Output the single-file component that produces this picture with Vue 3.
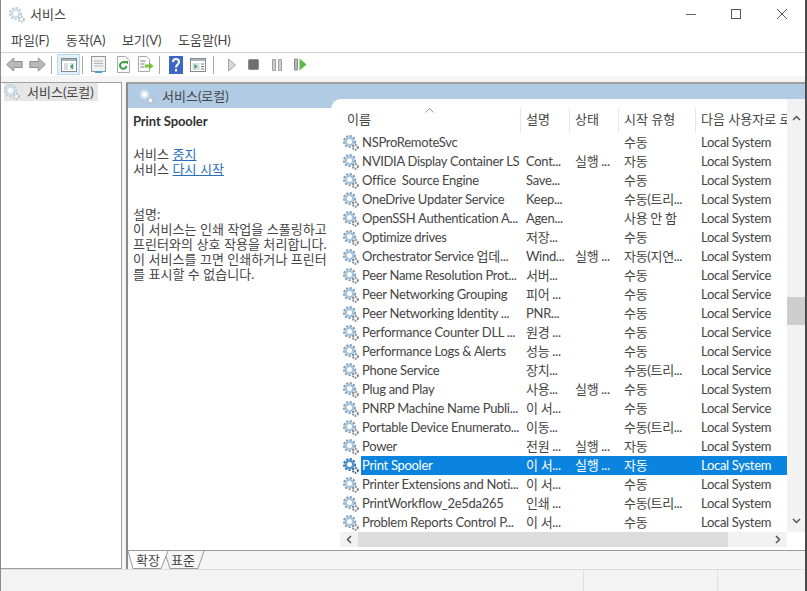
<script setup>
import { h } from 'vue'

const SYS = 'Local System'
const SVC = 'Local Service'
const RUN = '실행 ...'

const services = [
  ['NSProRemoteSvc', '', '', '수동', SYS],
  ['NVIDIA Display Container LS', 'Cont...', RUN, '자동', SYS],
  ['Office  Source Engine', 'Save...', '', '수동', SYS],
  ['OneDrive Updater Service', 'Keep...', '', '수동(트리...', SYS],
  ['OpenSSH Authentication A...', 'Agen...', '', '사용 안 함', SYS],
  ['Optimize drives', '저장...', '', '수동', SYS],
  ['Orchestrator Service 업데...', 'Wind...', RUN, '자동(지연...', SYS],
  ['Peer Name Resolution Prot...', '서버...', '', '수동', SVC],
  ['Peer Networking Grouping', '피어 ...', '', '수동', SVC],
  ['Peer Networking Identity ...', 'PNR...', '', '수동', SVC],
  ['Performance Counter DLL ...', '원경 ...', '', '수동', SVC],
  ['Performance Logs & Alerts', '성능 ...', '', '수동', SVC],
  ['Phone Service', '장치...', '', '수동(트리...', SVC],
  ['Plug and Play', '사용...', RUN, '수동', SYS],
  ['PNRP Machine Name Publi...', '이 서...', '', '수동', SVC],
  ['Portable Device Enumerato...', '이동...', '', '수동(트리...', SYS],
  ['Power', '전원 ...', RUN, '자동', SYS],
  ['Print Spooler', '이 서...', RUN, '자동', SYS],
  ['Printer Extensions and Noti...', '이 서...', '', '수동', SYS],
  ['PrintWorkflow_2e5da265', '인쇄 ...', '', '수동(트리...', SYS],
  ['Problem Reports Control P...', '이 서...', '', '수동', SYS],
]

const columns = ['설명', '상태', '시작 유형', '다음 사용자로 로그온']

const gearColors = {
  normal: ['#7d97ad', '#a6c4dc', '#7b838a'],
  pale: ['#b4cbdc', '#cfe0ec', '#b6bcc1'],
  selected: ['#2f6fa8', '#4d94d0', '#3a5f80'],
}

// two meshed cogs, the same picture everywhere a service shows up
function GearIcon(props) {
  const [teeth, body, small] = gearColors[props.tone || 'normal']
  return h('svg', { class: 'gear', width: 16, height: 16, viewBox: '0 0 16 16' }, [
    h('circle', { cx: 6.5, cy: 6.5, r: 5.6, fill: 'none', stroke: teeth, 'stroke-width': 1.8, 'stroke-dasharray': '2.2 1.5' }),
    h('circle', { cx: 6.5, cy: 6.5, r: 3.7, fill: '#fff', stroke: body, 'stroke-width': 2.4 }),
    h('circle', { cx: 12.4, cy: 12.4, r: 2.4, fill: '#fff', stroke: small, 'stroke-width': 2, 'stroke-dasharray': '1.5 1' }),
  ])
}
GearIcon.props = ['tone']
</script>

<template>
  <div class="window">
    <header class="titlebar">
      <GearIcon tone="pale" />
      <span class="title">서비스</span>
      <div class="controls">
        <svg width="12" height="12" viewBox="0 0 12 12"><path d="M0 6.500h10" stroke="#666" /></svg>
        <svg width="12" height="12" viewBox="0 0 12 12"><rect x="0.500" y="1.500" width="9" height="9" fill="none" stroke="#555" /></svg>
        <svg width="12" height="12" viewBox="0 0 12 12"><path d="M1 1l10 10M11 1L1 11" stroke="#555" /></svg>
      </div>
    </header>

    <nav class="menubar">
      <span>파일(F)</span>
      <span>동작(A)</span>
      <span>보기(V)</span>
      <span>도움말(H)</span>
    </nav>

    <div class="toolbar">
      <svg class="tool back" width="17" height="15" viewBox="0 0 17 15"><path d="M0.700 7.500l7-6.500v3.500h8.500v6H7.700V14z" fill="#b8b8b8" stroke="#8f8f8f" /></svg>
      <svg class="tool forward" width="17" height="15" viewBox="0 0 17 15"><path d="M16.300 7.500l-7-6.500v3.500H0.800v6h8.500V14z" fill="#b8b8b8" stroke="#8f8f8f" /></svg>
      <i class="sep sep1"></i>
      <span class="tool-on">
        <svg width="16" height="14" viewBox="0 0 16 14">
          <rect x="0.500" y="0.500" width="15" height="13" fill="#fff" stroke="#8a8a8a" />
          <rect x="1" y="1" width="14" height="2" fill="#a8b4bc" />
          <path d="M3 5h4v7H3zM9 5h4v7H9z" fill="#d5dde2" />
          <path d="M12 6v5L9 8.500z" fill="#37a04b" />
        </svg>
      </span>
      <i class="sep sep2"></i>
      <svg class="tool props" width="15" height="17" viewBox="0 0 15 17">
        <rect x="0.500" y="0.500" width="14" height="15" fill="#f2f2f2" stroke="#969696" />
        <path d="M3 5h9M3 7.500h9M3 10h9" stroke="#aab5bf" />
        <path d="M4 16h7" stroke="#45a3dc" stroke-width="2" />
      </svg>
      <svg class="tool refresh" width="15" height="17" viewBox="0 0 15 17">
        <path d="M1.500 0.500h8l4 4v12h-12z" fill="#fbfbfb" stroke="#aaa" />
        <path d="M10.500 10a3.300 3.300 0 1 1-1-3" fill="none" stroke="#3f9e4a" stroke-width="2" />
        <path d="M8 5h4v3.500z" fill="#3f9e4a" />
      </svg>
      <svg class="tool export" width="17" height="17" viewBox="0 0 17 17">
        <path d="M1.500 0.500h8l3 3v12h-11z" fill="#fbfbfb" stroke="#aaa" />
        <path d="M3.500 5h5M3.500 8h4M3.500 11h4" stroke="#777" />
        <path d="M8 8.500h4V6l4.500 4-4.500 4v-2.500H8z" fill="#7ac142" />
      </svg>
      <i class="sep sep3"></i>
      <svg class="tool help" width="14" height="18" viewBox="0 0 14 18">
        <rect width="14" height="18" fill="#3f66c4" />
        <path d="M4 6c0-4 6-4 6 0 0 2.500-3 2.500-3 5.500M7 13v2.500" fill="none" stroke="#fff" stroke-width="2" />
      </svg>
      <svg class="tool view" width="16" height="14" viewBox="0 0 16 14">
        <rect x="0.500" y="0.500" width="15" height="13" fill="#fff" stroke="#8a8a8a" />
        <rect x="1" y="1" width="14" height="2" fill="#a8b4bc" />
        <path d="M2.500 5h7v7h-7z" fill="#d5dde2" />
        <path d="M4.500 6v5l3-2.500z" fill="#37a04b" />
        <path d="M11 6h3M11 8.500h3M11 11h3" stroke="#777" />
      </svg>
      <i class="sep sep4"></i>
      <svg class="tool play" width="8" height="14" viewBox="0 0 8 14"><path d="M0.500 1v12l7-6z" fill="#d8d8d8" stroke="#a6a6a6" /></svg>
      <svg class="tool stop" width="11" height="11" viewBox="0 0 11 11"><rect x="0.500" y="0.500" width="10" height="10" rx="1" fill="#6f6f6f" stroke="#8c8c8c" /></svg>
      <svg class="tool pause" width="10" height="12" viewBox="0 0 10 12"><path d="M0.500 0.500h3v11h-3zM6.500 0.500h3v11h-3z" fill="#cfcfcf" stroke="#a0a0a0" /></svg>
      <svg class="tool resume" width="13" height="13" viewBox="0 0 13 13"><path d="M0.500 1h3v11h-3z" fill="#b8b8b8" stroke="#8c8c8c" /><path d="M5.500 0.500v12l7-6z" fill="#58b947" /></svg>
    </div>

    <main class="content">
      <aside class="tree">
        <div class="tree-item">
          <GearIcon tone="pale" />
          <span>서비스(로컬)</span>
        </div>
      </aside>

      <section class="pane">
        <div class="pane-head">
          <GearIcon tone="pale" />
          <span>서비스(로컬)</span>
        </div>

        <div class="pane-body">
          <div class="detail">
            <h1>Print Spooler</h1>
            <p>서비스 <a>중지</a><br>서비스 <a>다시 시작</a></p>
            <p>설명:<br>이 서비스는 인쇄 작업을 스풀링하고<br>프린터와의 상호 작용을 처리합니다.<br>이 서비스를 끄면 인쇄하거나 프린터<br>를 표시할 수 없습니다.</p>
          </div>

          <div class="list">
            <div class="list-main">
              <div class="list-rows">
                <div class="list-head">
                  <div class="col-name">
                    <span>이름</span>
                    <svg class="sort" width="9" height="5" viewBox="0 0 9 5"><path d="M0.500 4.500l4-4 4 4" fill="none" stroke="#999" /></svg>
                  </div>
                  <div v-for="c in columns" :key="c" class="col">{{ c }}</div>
                </div>
                <div v-for="s in services" :key="s[0]" class="row" :class="{ selected: s[0] === 'Print Spooler' }">
                  <GearIcon :tone="s[0] === 'Print Spooler' ? 'selected' : 'normal'" />
                  <div class="cells">
                    <span class="name">{{ s[0] }}</span>
                    <span>{{ s[1] }}</span>
                    <span>{{ s[2] }}</span>
                    <span>{{ s[3] }}</span>
                    <span>{{ s[4] }}</span>
                  </div>
                </div>
              </div>
              <div class="vscroll">
                <svg width="9" height="6" viewBox="0 0 9 6"><path d="M1 5l3.500-3.500L8 5" fill="none" stroke="#555" stroke-width="1.500" /></svg>
                <div class="vtrack"><div class="vthumb"></div></div>
                <svg width="9" height="6" viewBox="0 0 9 6"><path d="M1 1l3.500 3.500L8 1" fill="none" stroke="#555" stroke-width="1.500" /></svg>
              </div>
            </div>
            <div class="hscroll">
              <svg width="6" height="9" viewBox="0 0 6 9"><path d="M5 1L1.500 4.500 5 8" fill="none" stroke="#555" stroke-width="1.500" /></svg>
              <div class="htrack"><div class="hthumb"></div></div>
              <svg width="6" height="9" viewBox="0 0 6 9"><path d="M1 1l3.500 3.500L1 8" fill="none" stroke="#555" stroke-width="1.500" /></svg>
            </div>
          </div>
        </div>

        <div class="tabs">
          <svg class="tab-lines" width="80" height="18" viewBox="0 0 80 18">
            <path d="M0 0L5 17.500H33L40 0z" fill="#fff" />
            <path d="M0 0L5 17.500H33L40 0M38 5L42 17.500H70L76 0" fill="none" stroke="#9a9a9a" />
          </svg>
          <span class="tab">확장</span>
          <span class="tab">표준</span>
        </div>
      </section>
    </main>

    <footer class="status">
      <i></i>
      <i></i>
    </footer>
  </div>
</template>

<style>
html, body {
  margin: 0;
  background: #fff;
}
</style>

<style scoped>
.window {
  width: 807px;
  height: 591px;
  box-sizing: border-box;
  display: flex;
  flex-direction: column;
  overflow: hidden;
  border-left: 1px solid #8a8a8a;
  border-right: 2px solid #4a4a4a;
  background: #fff;
  color: #454545;
  font: 13px/15px Lato, "Noto Sans CJK KR", sans-serif;
}

.titlebar {
  height: 29px;
  flex: none;
  display: flex;
  align-items: center;
  padding-left: 8px;
}
.title {
  margin-left: 5px;
}
.controls {
  margin-left: auto;
  display: flex;
  gap: 33px;
  padding-right: 17px;
  padding-bottom: 1px;
}

.menubar {
  height: 23px;
  flex: none;
  display: flex;
  align-items: center;
  gap: 16.5px;
  padding-left: 10px;
  border-bottom: 1px solid #cfcfcf;
}

/* pixel gaps between toolbar groups follow the original's button spacing */
.toolbar {
  height: 23px;
  flex: none;
  display: flex;
  align-items: center;
  padding-left: 5px;
}
.tool {
  flex: none;
}
.sep {
  width: 1px;
  height: 18px;
  flex: none;
  background: #a8a8a8;
}
.forward { margin-left: 6px; }
.sep1 { margin-left: 5px; }
.tool-on {
  width: 23px;
  height: 21px;
  flex: none;
  box-sizing: border-box;
  display: flex;
  align-items: center;
  justify-content: center;
  margin-left: 5px;
  background: #e3f0fa;
  border: 1px solid #b9d9f0;
}
.sep2 { margin-left: 2px; }
.props { margin-left: 8px; }
.refresh { margin-left: 10px; }
.export { margin-left: 6px; }
.sep3 { margin-left: 5px; }
.help { margin-left: 9px; }
.view { margin-left: 7px; }
.sep4 { margin-left: 7px; }
.play { margin-left: 14px; }
.stop { margin-left: 12px; }
.pause { margin-left: 13px; }
.resume { margin-left: 12px; }

.content {
  flex: 1;
  min-height: 0;
  display: flex;
  gap: 4px;
  padding-top: 6px;
  background: #f5f5f5;
}

.tree {
  width: 121px;
  flex: none;
  box-sizing: border-box;
  padding: 0 3px;
  background: #fff;
  border-top: 1px solid #a0a0a0;
  border-right: 1px solid #a0a0a0;
  border-bottom: 1px solid #a0a0a0;
}
.tree-item {
  width: 94px;
  height: 18px;
  display: flex;
  align-items: center;
  gap: 7px;
  box-sizing: border-box;
  background: #e6e6e6;
}

.pane {
  flex: 1;
  min-width: 0;
  display: flex;
  flex-direction: column;
  border-left: 2px solid #8a8a8a;
  border-top: 2px solid #a0a0a0;
}
.pane-head {
  height: 24px;
  flex: none;
  display: flex;
  align-items: center;
  gap: 8px;
  padding-left: 10px;
  background: #b0cbe3;
}

.pane-body {
  flex: 1;
  min-height: 0;
  display: flex;
  background: #fff;
  border-bottom: 1px solid #9a9a9a;
}

.detail {
  width: 203px;
  flex: none;
  box-sizing: border-box;
  padding: 6px 0 0 5px;
  letter-spacing: 0.06px;
}
.detail h1 {
  margin: 0 0 18px;
  font-size: 13px;
  line-height: 15px;
  font-weight: 700;
  color: #333;
  letter-spacing: -0.1px;
}
.detail p {
  margin: 0 0 30px;
  white-space: nowrap;
}
.detail a {
  color: #2a6fb8;
  text-decoration: underline;
}

.list {
  flex: 1;
  min-width: 0;
  margin-top: -9px;
  position: relative;
  background: #fff;
  border-top-left-radius: 10px;
  display: flex;
  flex-direction: column;
}
.list-main {
  display: flex;
}
.list-rows {
  width: 456px;
  flex: none;
  padding-left: 12px;
  box-sizing: border-box;
  overflow: hidden;
}
.list-head {
  height: 34px;
  display: grid;
  grid-template-columns: 177px 49px 49px 77px 92px;
  align-items: end;
  white-space: nowrap;
}
.col-name, .col {
  height: 25px;
  box-sizing: border-box;
  padding: 4px 0 0 6px;
  overflow: hidden;
}
.col {
  border-left: 1px solid #e8e8e8;
  padding-left: 5px;
}
.col-name {
  position: relative;
  padding-left: 4px;
  overflow: visible;
}
.sort {
  position: absolute;
  left: 82px;
  top: 0;
}

.row {
  height: 19px;
  display: flex;
  align-items: center;
}
.gear {
  flex: none;
}
.row .gear {
  margin-right: 2px;
}
.cells {
  flex: 1;
  height: 19px;
  display: grid;
  grid-template-columns: 159px 49px 49px 77px 92px;
  align-items: center;
  white-space: pre;
  letter-spacing: -0.3px;
}
.cells span {
  padding-left: 6px;
  overflow: hidden;
}
.cells .name {
  padding-left: 1px;
}
.selected .cells {
  background: #0a84de;
  color: #fff;
}

.vscroll {
  flex: 1;
  display: flex;
  flex-direction: column;
  align-items: center;
  padding-top: 16px;
  padding-bottom: 8px;
  background: #f2f2f2;
  box-sizing: border-box;
}
.vtrack {
  flex: 1;
  width: 100%;
  padding-top: 176px;
  box-sizing: border-box;
}
.vthumb {
  height: 28px;
  background: #cdcdcd;
}

.hscroll {
  height: 15px;
  margin-left: 9px;
  width: 447px;
  flex: none;
  display: flex;
  align-items: center;
  gap: 6px;
  padding: 0 6px;
  box-sizing: border-box;
  background: #f2f2f2;
}
.htrack {
  flex: 1;
  height: 15px;
}
.hthumb {
  width: 370px;
  height: 100%;
  background: #dcdcdc;
}

.tabs {
  height: 18px;
  flex: none;
  position: relative;
  display: flex;
  gap: 11px;
  padding-left: 8px;
  background: #f5f5f5;
}
.tab-lines {
  position: absolute;
  left: 0;
  top: 0;
}
.tab {
  position: relative;
  line-height: 18px;
}

.status {
  height: 22px;
  flex: none;
  box-sizing: border-box;
  display: flex;
  justify-content: flex-end;
  gap: 133px;
  padding-right: 87px;
  background: #f3f3f3;
  border-top: 1px solid #dcdcdc;
}
.status i {
  width: 1px;
  background: #e0e0e0;
}
</style>
